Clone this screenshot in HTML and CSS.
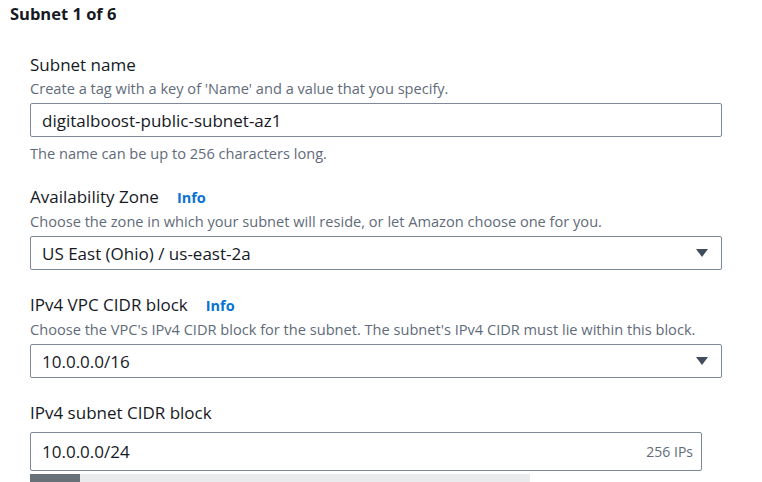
FILE: index.html
```html
<!DOCTYPE html>
<html lang="en">
<head>
<meta charset="utf-8">
<title>Subnet settings</title>
<link rel="stylesheet" href="styles.css">
</head>
<body>
<div class="page">
  <h2 class="heading">Subnet 1 of 6</h2>
  <div class="fields">
    <div class="field field-first">
      <div class="label">Subnet name</div>
      <div class="desc">Create a tag with a key of 'Name' and a value that you specify.</div>
      <div class="control"><span class="value">digitalboost-public-subnet-az1</span></div>
      <div class="constraint">The name can be up to 256 characters long.</div>
    </div>
    <div class="field">
      <div class="label">Availability Zone <span class="info">Info</span></div>
      <div class="desc">Choose the zone in which your subnet will reside, or let Amazon choose one for you.</div>
      <div class="control select"><span class="value">US East (Ohio) / us-east-2a</span><span class="caret"></span></div>
    </div>
    <div class="field">
      <div class="label">IPv4 VPC CIDR block <span class="info">Info</span></div>
      <div class="desc">Choose the VPC's IPv4 CIDR block for the subnet. The subnet's IPv4 CIDR must lie within this block.</div>
      <div class="control select"><span class="value">10.0.0.0/16</span><span class="caret"></span></div>
    </div>
    <div class="field">
      <div class="label">IPv4 subnet CIDR block</div>
      <div class="control cidr"><span class="value">10.0.0.0/24</span><span class="count">256 IPs</span></div>
      <div class="slider"><div class="slider-fill"></div></div>
    </div>
  </div>
</div>
</body>
</html>
```

FILE: styles.css
```css
html, body {
  margin: 0;
  padding: 0;
  background: #ffffff;
}
body {
  font-family: "Open Sans", "Noto Sans", sans-serif;
  color: #16191f;
  overflow: hidden;
}
.page {
  padding: 4px 40px 0 10px;
}
.heading {
  margin: 0;
  font-size: 16.5px;
  line-height: 20px;
  font-weight: 700;
}
.fields {
  display: flex;
  flex-direction: column;
  padding-left: 20px;
}
.field {
  display: flex;
  flex-direction: column;
  margin-top: 24px;
}
.field-first {
  margin-top: 30px;
}
.label {
  font-size: 17px;
  line-height: 22px;
  display: flex;
  align-items: baseline;
}
.info {
  margin-left: 18px;
  font-size: 14.5px;
  font-weight: 700;
  color: #0972d3;
}
.desc {
  font-size: 14.6px;
  line-height: 18px;
  color: #5f6b7a;
  margin-top: 3px;
  white-space: nowrap;
}
.control {
  margin-top: 6px;
  height: 34px;
  box-sizing: border-box;
  border: 1px solid #7d8998;
  border-radius: 2px;
  display: flex;
  align-items: center;
  padding: 0 13px 0 11px;
  font-size: 17px;
}
.value {
  flex: 1;
  white-space: nowrap;
}
.caret {
  width: 0;
  height: 0;
  border-left: 6px solid transparent;
  border-right: 6px solid transparent;
  border-top: 8px solid #414d5c;
}
.constraint {
  font-size: 14.6px;
  line-height: 18px;
  color: #5f6b7a;
  margin-top: 7px;
}
.cidr {
  margin-top: 8px;
  height: 39px;
  margin-right: 20px;
  padding-right: 8px;
}
.count {
  font-size: 14px;
  color: #5f6b7a;
}
.slider {
  margin-top: 3px;
  height: 10px;
  width: 500px;
  background: #e9ebed;
}
.slider-fill {
  width: 50px;
  height: 100%;
  background: #687078;
}
```
